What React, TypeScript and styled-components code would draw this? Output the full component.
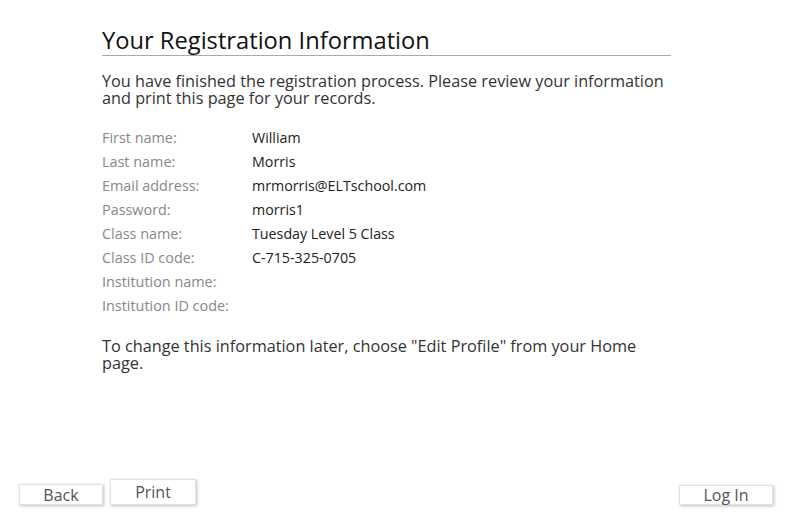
import React from "react";
import styled, { createGlobalStyle } from "styled-components";

const Global = createGlobalStyle`
  html, body { margin: 0; padding: 0; background: #fff; }
  body { font-family: "Open Sans", "Liberation Sans", sans-serif; }
`;

const Page = styled.div`
  width: 803px;
  height: 530px;
  display: flex;
  flex-direction: column;
  box-sizing: border-box;
  overflow: hidden;
`;

const Content = styled.main`
  width: 569px;
  margin-left: 102px;
  padding-top: 26px;
`;

const Title = styled.h1`
  margin: 0;
  font-size: 23.7px;
  font-weight: 400;
  line-height: 29px;
  color: #111;
  border-bottom: 1px solid #aaa;
  padding-bottom: 0;
`;

const Intro = styled.p`
  margin: 17px 0 0;
  font-size: 16.25px;
  line-height: 17px;
  color: #333;
`;

const InfoList = styled.dl`
  margin: 19px 0 0;
  display: grid;
  grid-template-columns: 150px 1fr;
  grid-auto-rows: 24px;
  line-height: 24px;
`;

const Label = styled.dt`
  color: #888;
  font-size: 14.4px;
  margin: 0;
`;

const Value = styled.dd`
  color: #222;
  font-size: 14.25px;
  margin: 0;
`;

const Note = styled.p`
  margin: 20px 0 0;
  font-size: 16.25px;
  line-height: 17px;
  color: #333;
`;

const Footer = styled.footer`
  margin-top: auto;
  display: flex;
  align-items: flex-end;
  padding: 0 30px 25px 19px;
  gap: 7px;
`;

const Button = styled.button<{ $w: number; $h: number; $push?: boolean }>`
  width: ${(p) => p.$w}px;
  height: ${(p) => p.$h}px;
  margin-left: ${(p) => (p.$push ? "auto" : "0")};
  background: #fff;
  border: 1px solid #e2e2e2;
  box-shadow: 1px 1px 3px rgba(0, 0, 0, 0.25);
  font-family: "Open Sans", "Liberation Sans", sans-serif;
  font-size: 16px;
  line-height: 18px;
  color: #555;
  padding: 0;
  display: flex;
  align-items: center;
  justify-content: center;
  cursor: pointer;
`;

const rows: [string, string][] = [
  ["First name:", "William"],
  ["Last name:", "Morris"],
  ["Email address:", "mrmorris@ELTschool.com"],
  ["Password:", "morris1"],
  ["Class name:", "Tuesday Level 5 Class"],
  ["Class ID code:", "C-715-325-0705"],
  ["Institution name:", ""],
  ["Institution ID code:", ""],
];

export default function App() {
  return (
    <Page>
      <Global />
      <Content>
        <Title>Your Registration Information</Title>
        <Intro>
          You have finished the registration process. Please review your information and print this
          page for your records.
        </Intro>
        <InfoList>
          {rows.map(([l, v]) => (
            <React.Fragment key={l}>
              <Label>{l}</Label>
              <Value>{v}</Value>
            </React.Fragment>
          ))}
        </InfoList>
        <Note>To change this information later, choose "Edit Profile" from your Home page.</Note>
      </Content>
      <Footer>
        <Button $w={84} $h={21}>Back</Button>
        <Button $w={86} $h={26}>Print</Button>
        <Button $w={94} $h={20} $push>Log In</Button>
      </Footer>
    </Page>
  );
}
